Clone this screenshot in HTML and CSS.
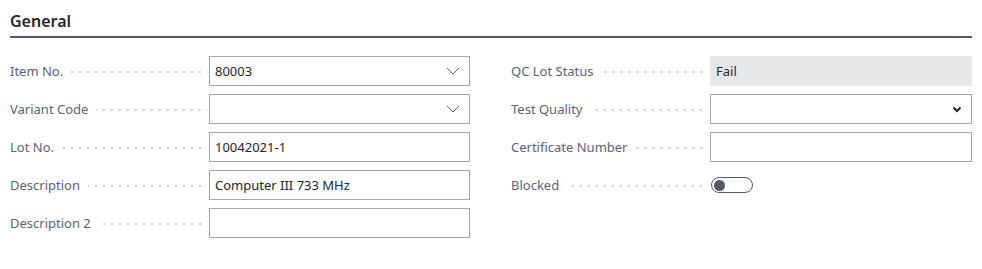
FILE: index.html
```html
<!DOCTYPE html>
<html lang="en">
<head>
  <meta charset="UTF-8" />
  <title>General</title>
  <link rel="stylesheet" href="styles.css">
</head>
<body>
  <div class="section">
    <h2 class="section-title">General</h2>

    <div class="columns">
      <div class="column">
        <div class="field">
          <label class="caption">Item No.</label>
          <div class="control lookup">
            <span class="value">80003</span>
            <svg class="chevron" width="14" height="8" viewBox="0 0 14 8"><path d="M1 1l6 6 6-6" fill="none" stroke="#666" stroke-width="1"/></svg>
          </div>
        </div>
        <div class="field">
          <label class="caption">Variant Code</label>
          <div class="control lookup">
            <span class="value"></span>
            <svg class="chevron" width="14" height="8" viewBox="0 0 14 8"><path d="M1 1l6 6 6-6" fill="none" stroke="#666" stroke-width="1"/></svg>
          </div>
        </div>
        <div class="field">
          <label class="caption">Lot No.</label>
          <div class="control"><span class="value">10042021-1</span></div>
        </div>
        <div class="field">
          <label class="caption">Description</label>
          <div class="control"><span class="value">Computer III 733 MHz</span></div>
        </div>
        <div class="field">
          <label class="caption">Description 2</label>
          <div class="control"><span class="value"></span></div>
        </div>
      </div>

      <div class="column">
        <div class="field">
          <label class="caption">QC Lot Status</label>
          <div class="control readonly"><span class="value">Fail</span></div>
        </div>
        <div class="field">
          <label class="caption">Test Quality</label>
          <div class="control lookup">
            <span class="value"></span>
            <svg class="chevron" width="10" height="7" viewBox="0 0 10 7"><path d="M1.5 1.5l3.5 3.5 3.5-3.5" fill="none" stroke="#222" stroke-width="2"/></svg>
          </div>
        </div>
        <div class="field">
          <label class="caption">Certificate Number</label>
          <div class="control"><span class="value"></span></div>
        </div>
        <div class="field">
          <label class="caption">Blocked</label>
          <div class="toggle-wrap">
            <span class="toggle"><span class="knob"></span></span>
          </div>
        </div>
      </div>
    </div>
  </div>
</body>
</html>
```

FILE: styles.css
```css
body {
  margin: 0;
  font-family: 'Segoe UI', 'Noto Sans', 'Open Sans', sans-serif;
  background: #fff;
  color: #212121;
}

.section {
  padding: 0 10px;
}

.section-title {
  margin: 0;
  padding-top: 10px;
  height: 26px;
  font-size: 16px;
  font-weight: 600;
  line-height: 22px;
  color: #262626;
  border-bottom: 2px solid #505a6a;
}

.columns {
  display: grid;
  grid-template-columns: 460px 1fr;
  column-gap: 41px;
  padding-top: 18px;
}

.field {
  display: flex;
  align-items: center;
  height: 30px;
  margin-bottom: 8px;
}

.caption {
  display: flex;
  align-items: center;
  width: 199px;
  flex: none;
  font-size: 13px;
  color: #5a6473;
  white-space: nowrap;
}

.caption::after {
  content: "";
  flex: 1;
  height: 2px;
  margin: 2px 2px 0 8px;
  background-image: linear-gradient(to right, #cfcfcf 2px, transparent 2px);
  background-size: 8px 2px;
  background-position: right;
}

.control {
  box-sizing: border-box;
  display: flex;
  align-items: center;
  flex: 1;
  height: 30px;
  padding: 0 5px;
  border: 1px solid #a6a6a6;
  font-size: 13px;
  color: #262626;
}

.control .value {
  flex: 1;
}

.control.readonly {
  background: #e6e7e8;
  border-color: #e6e7e8;
}

.chevron {
  flex: none;
  margin-right: 4px;
}

.toggle-wrap {
  flex: 1;
  display: flex;
  align-items: center;
  padding-left: 1px;
}

.toggle {
  box-sizing: border-box;
  display: flex;
  align-items: center;
  width: 42px;
  height: 16px;
  border: 1px solid #505a6a;
  border-radius: 8px;
  padding-left: 2px;
}

.knob {
  width: 11px;
  height: 11px;
  border-radius: 50%;
  background: #505a6a;
}
```
